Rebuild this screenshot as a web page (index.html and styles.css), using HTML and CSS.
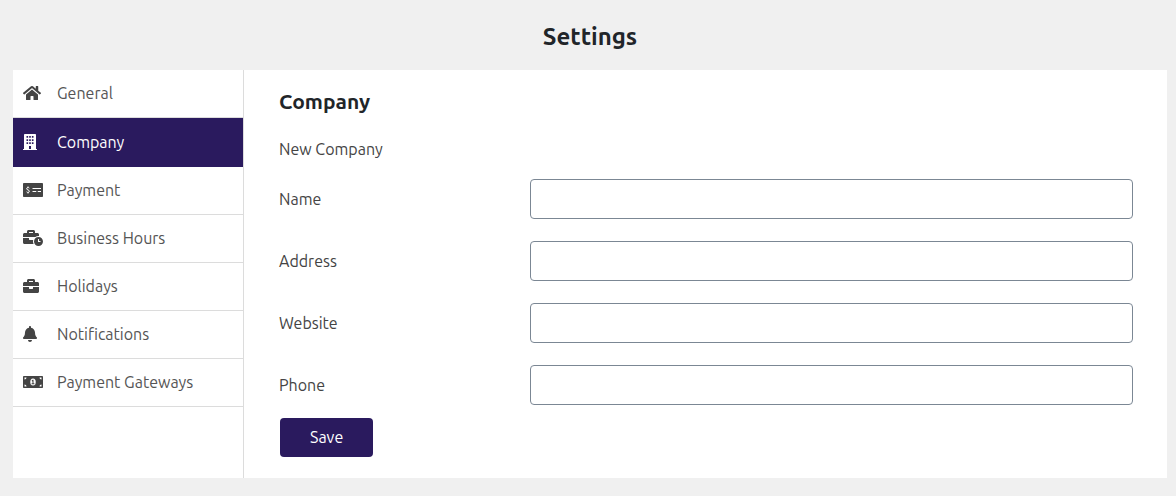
FILE: index.html
```html
<!DOCTYPE html>
<html lang="en">
<head>
<meta charset="utf-8">
<meta name="viewport" content="width=device-width, initial-scale=1">
<title>Settings</title>
<link rel="stylesheet" href="styles.css">
</head>
<body>
<main class="page">
  <h1 class="page-title">Settings</h1>
  <div class="panel">
    <nav class="menu" aria-label="Settings">
      <a class="menu-item" href="#general">
        <span class="menu-icon"><svg class="icon" viewBox="0 0 576 512" aria-hidden="true"><path d="M280.37 148.26L96 300.11V464a16 16 0 0 0 16 16l112.06-.29a16 16 0 0 0 15.92-16V368a16 16 0 0 1 16-16h64a16 16 0 0 1 16 16v95.64a16 16 0 0 0 16 16.05L464 480a16 16 0 0 0 16-16V300L295.67 148.26a12.19 12.19 0 0 0-15.3 0zM571.6 251.47L488 182.56V44.05a12 12 0 0 0-12-12h-56a12 12 0 0 0-12 12v72.61L318.47 43a48 48 0 0 0-61 0L4.34 251.47a12 12 0 0 0-1.6 16.9l25.5 31A12 12 0 0 0 45.15 301l235.22-193.74a12.19 12.19 0 0 1 15.3 0L530.9 301a12 12 0 0 0 16.9-1.6l25.5-31a12 12 0 0 0-1.7-16.93z"/></svg></span>
        General
      </a>
      <a class="menu-item menu-item-active" href="#company" aria-current="page">
        <span class="menu-icon"><svg class="icon" viewBox="0 0 448 512" aria-hidden="true"><path fill-rule="evenodd" d="M436 480h-20V24c0-13-11-24-24-24H56C43 0 32 11 32 24v456H12c-7 0-12 5-12 12v20h448v-20c0-7-5-12-12-12zM112 64h52v56h-52zM198 64h52v56h-52zM284 64h52v56h-52zM112 164h52v56h-52zM198 164h52v56h-52zM284 164h52v56h-52zM112 264h52v52h-52zM198 264h52v52h-52zM284 264h52v52h-52zM192 384h64v96h-64z"/></svg></span>
        Company
      </a>
      <a class="menu-item" href="#payment">
        <span class="menu-icon"><svg class="icon" viewBox="0 0 640 512" aria-hidden="true"><rect y="32" width="640" height="448" rx="26"/><g class="icon-cut-line"><path d="M304 208h272M304 304h120M472 304h104M160 144v32M160 336v32"/><path d="M204 196c-12-14-28-18-44-18-28 0-44 14-44 36 0 26 22 33 44 40s44 15 44 42c0 24-18 38-44 38-18 0-34-6-46-20"/></g></svg></span>
        Payment
      </a>
      <a class="menu-item" href="#business-hours">
        <span class="menu-icon"><svg class="icon" viewBox="0 0 640 512" aria-hidden="true"><path d="M496 224c-79.59 0-144 64.41-144 144s64.41 144 144 144 144-64.41 144-144-64.41-144-144-144zm64 150.29c0 5.34-4.37 9.71-9.71 9.71h-60.57c-5.34 0-9.71-4.37-9.71-9.71v-76.57c0-5.34 4.37-9.71 9.71-9.71h12.57c5.34 0 9.71 4.37 9.71 9.71V352h38.29c5.34 0 9.71 4.37 9.71 9.71v12.58zM496 192c5.4 0 10.72.33 16 .81V144c0-25.6-22.4-48-48-48h-80V48c0-25.6-22.4-48-48-48H176c-25.6 0-48 22.4-48 48v48H48c-25.6 0-48 22.4-48 48v80h395.12c28.6-20.09 63.35-32 100.88-32zM320 96H192V64h128v32zm6.82 224H208c-8.84 0-16-7.16-16-16v-48H0v144c0 25.6 22.4 48 48 48h291.43C327.1 423.96 320 396.82 320 368c0-16.66 2.48-32.72 6.82-48z"/></svg></span>
        Business Hours
      </a>
      <a class="menu-item" href="#holidays">
        <span class="menu-icon"><svg class="icon" viewBox="0 0 512 512" aria-hidden="true"><path d="M320 336c0 8.84-7.16 16-16 16h-96c-8.84 0-16-7.16-16-16v-48H0v144c0 25.6 22.4 48 48 48h416c25.6 0 48-22.4 48-48V288H320v48zm144-208h-80V80c0-25.6-22.4-48-48-48H176c-25.6 0-48 22.4-48 48v48H48c-25.6 0-48 22.4-48 48v80h512v-80c0-25.6-22.4-48-48-48zm-144 0H192V96h128v32z"/></svg></span>
        Holidays
      </a>
      <a class="menu-item" href="#notifications">
        <span class="menu-icon"><svg class="icon" viewBox="0 0 448 512" aria-hidden="true"><path d="M224 512c35.32 0 63.97-28.65 63.97-64H160.03c0 35.35 28.65 64 63.97 64zm215.39-149.71c-19.32-20.76-55.47-51.99-55.47-154.29 0-77.7-54.48-139.9-127.94-155.16V32c0-17.67-14.32-32-31.98-32s-31.98 14.33-31.98 32v20.84C118.56 68.1 64.08 130.3 64.08 208c0 102.3-36.15 133.53-55.47 154.29-6 6.45-8.66 14.16-8.61 21.71.11 16.4 12.98 32 32.1 32h383.8c19.12 0 32-15.6 32.1-32 .05-7.55-2.61-15.27-8.61-21.71z"/></svg></span>
        Notifications
      </a>
      <a class="menu-item" href="#payment-gateways">
        <span class="menu-icon"><svg class="icon" viewBox="0 0 640 512" aria-hidden="true"><rect y="64" width="640" height="384" rx="26"/><path class="icon-cut" d="M48 112h64c0 35-29 64-64 64zM592 112h-64c0 35 29 64 64 64zM48 400h64c0-35-29-64-64-64zM592 400h-64c0-35 29-64 64-64z"/><ellipse class="icon-cut" cx="320" cy="256" rx="88" ry="112"/><path d="M312 184h24v112h16c9 0 16 7 16 16v16h-96v-16c0-9 7-16 16-16h16v-66l-12 6-14-26z"/></svg></span>
        Payment Gateways
      </a>
    </nav>
    <section class="content">
      <h2 class="content-title">Company</h2>
      <p class="content-note">New Company</p>
      <form class="form">
        <div class="field"><label for="name">Name</label><input class="field-input" id="name" name="name" type="text"></div>
        <div class="field"><label for="address">Address</label><input class="field-input" id="address" name="address" type="text"></div>
        <div class="field"><label for="website">Website</label><input class="field-input" id="website" name="website" type="text"></div>
        <div class="field"><label for="phone">Phone</label><input class="field-input" id="phone" name="phone" type="text"></div>
        <button class="save" type="submit">Save</button>
      </form>
    </section>
  </div>
</main>
</body>
</html>
```
FILE: styles.css
```css
* { box-sizing: border-box; }

body {
  margin: 0;
  background: #f0f0f0;
  color: #444;
  font-family: Ubuntu, "Noto Sans", sans-serif;
  font-size: 16px;
  line-height: 24px;
}

.page { padding: 21px 9px 18px 13px; }

.page-title {
  margin: 0 0 17px;
  color: #212529;
  font-size: 24px;
  line-height: 32px;
  text-align: center;
}

.panel {
  display: flex;
  background: #fff;
}

.menu {
  flex: 0 0 231px;
  border-right: 1px solid #dcdcdc;
}

.menu-item {
  display: flex;
  align-items: center;
  padding: 11px 10px 12px;
  border-bottom: 1px solid #dcdcdc;
  color: #555;
  text-decoration: none;
}

.menu-item-active {
  border-top: 1px solid #2a1a5e;
  border-bottom-color: #2a1a5e;
  background: #2a1a5e;
  color: #fff;
}

.menu-icon {
  display: flex;
  flex: 0 0 34px;
  color: #444;
}

.menu-item-active .menu-icon { color: #fff; }

.icon {
  height: 16px;
  fill: currentColor;
}

.icon-cut { fill: #fff; }

.icon-cut-line {
  fill: none;
  stroke: #fff;
  stroke-width: 32px;
}

.content {
  flex: 1;
  min-width: 0;
  padding: 19px 34px 21px 35px;
}

.content-title {
  margin: 0 0 24px;
  color: #212529;
  font-size: 21px;
  line-height: 24px;
}

.content-note { margin: 0 0 18px; }

.form {
  display: grid;
  row-gap: 22px;
}

.field {
  display: grid;
  grid-template-columns: 5fr 12fr;
  align-items: center;
}

.field-input {
  width: 100%;
  height: 40px;
  padding: 6px 12px;
  border: 1px solid #7b8794;
  border-radius: 4px;
  background: #fff;
  color: inherit;
  font: inherit;
}

.save {
  justify-self: start;
  margin: -9px 0 0 1px;
  padding: 7px 30px 8px;
  border: 0;
  border-radius: 4px;
  background: #2a1a5e;
  color: #fff;
  font: inherit;
}
```
